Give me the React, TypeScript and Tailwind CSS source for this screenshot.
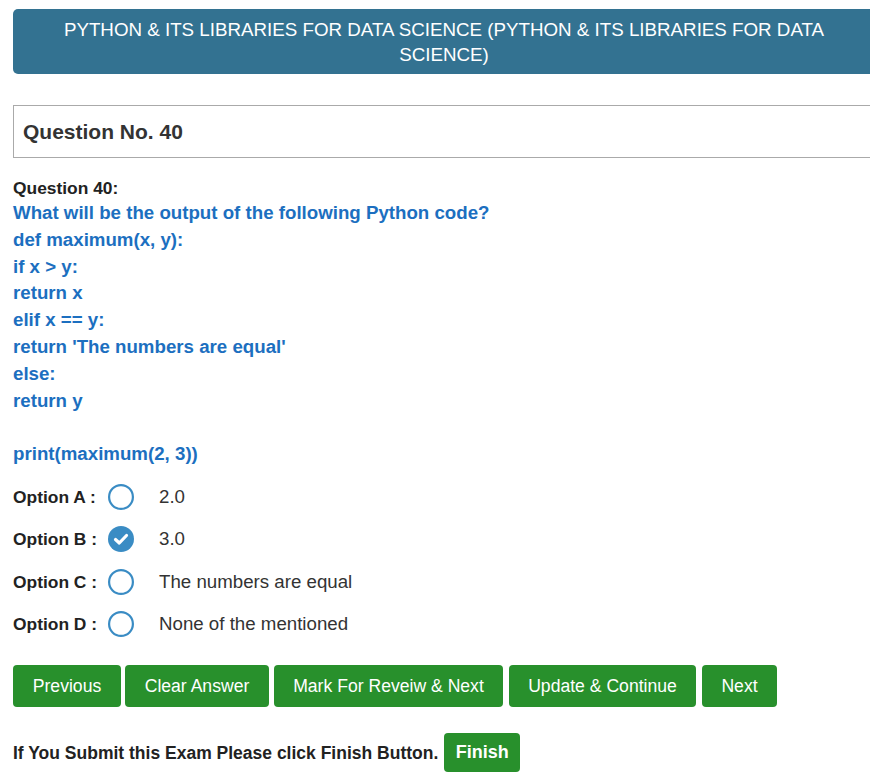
import React from "react";

const font = { fontFamily: '"Liberation Sans", Arial, sans-serif' };

function Radio({ checked }: { checked?: boolean }) {
  if (checked) {
    return (
      <svg width="26" height="26" viewBox="0 0 26 26" className="block">
        <circle cx="13" cy="13" r="13" fill="#3a8cc4" />
        <path d="M7.5 13.5 L11.3 17 L18.5 9.5" fill="none" stroke="#fff" strokeWidth="3.2" strokeLinecap="round" strokeLinejoin="round" />
      </svg>
    );
  }
  return (
    <svg width="26" height="26" viewBox="0 0 26 26" className="block">
      <circle cx="13" cy="13" r="11.9" fill="#fff" stroke="#3a8cc4" strokeWidth="2.2" />
    </svg>
  );
}

const options = [
  { label: "Option A :", text: "2.0" },
  { label: "Option B :", text: "3.0", checked: true },
  { label: "Option C :", text: "The numbers are equal" },
  { label: "Option D :", text: "None of the mentioned" },
];

const codeLines = [
  "What will be the output of the following Python code?",
  "def maximum(x, y):",
  "if x > y:",
  "return x",
  "elif x == y:",
  "return 'The numbers are equal'",
  "else:",
  "return y",
];

const buttons = ["Previous", "Clear Answer", "Mark For Reveiw & Next", "Update & Continue", "Next"];
const btnWidths = ["w-[108px]", "w-[144px]", "w-[229px]", "w-[187px]", "w-[75px]"];

export default function App() {
  return (
    <div className="w-[870px] h-[778px] overflow-hidden bg-white" style={font}>
      <div className="pl-[13px] pt-[9px] w-[880px]">
        <div className="w-[862px] h-[65px] bg-[#337291] rounded-[5px] flex items-center justify-center text-center text-white text-[18.75px] leading-[25px] px-[30px]">
          PYTHON &amp; ITS LIBRARIES FOR DATA SCIENCE (PYTHON &amp; ITS LIBRARIES FOR DATA SCIENCE)
        </div>
        <div className="mt-[31px] w-[870px] h-[53px] border border-[#aaaaaa] flex items-center pl-[9px]">
          <span className="text-[21px] font-bold text-[#333333]">Question No. 40</span>
        </div>
        <div className="mt-[19px] text-[17.4px] font-bold text-[#222222] leading-[22px]">Question 40:</div>
        <div className="mt-[1px] text-[18.7px] font-bold text-[#1c6fc0] leading-[26.8px]">
          {codeLines.map((l, i) => (
            <div key={i}>{l}</div>
          ))}
          <div className="h-[26.8px]" />
          <div>print(maximum(2, 3))</div>
        </div>
        <div className="mt-[16px] flex flex-col gap-[16.5px]">
          {options.map((o, i) => (
            <div key={i} className="flex items-center h-[26px]">
              <span className="w-[95px] text-[17.4px] font-bold text-[#222222]">{o.label}</span>
              <Radio checked={o.checked} />
              <span className="ml-[25px] text-[18.7px] text-[#333333]">{o.text}</span>
            </div>
          ))}
        </div>
        <div className="mt-[28px] flex">
          {buttons.map((b, i) => (
            <div
              key={i}
              className={`${btnWidths[i]} ${i === 0 ? "" : i === 1 ? "ml-[4px]" : i === 2 ? "ml-[5px]" : "ml-[6px]"} h-[42px] rounded-[4px] bg-[#28902c] text-white text-[17.6px] flex items-center justify-center`}
            >
              {b}
            </div>
          ))}
        </div>
        <div className="mt-[26px] flex items-center">
          <span className="text-[17.5px] font-bold text-[#222222]">If You Submit this Exam Please click Finish Button.</span>
          <div className="ml-[6px] w-[76px] h-[39px] rounded-[4px] bg-[#28902c] text-white text-[18px] font-bold flex items-center justify-center">
            Finish
          </div>
        </div>
      </div>
    </div>
  );
}
